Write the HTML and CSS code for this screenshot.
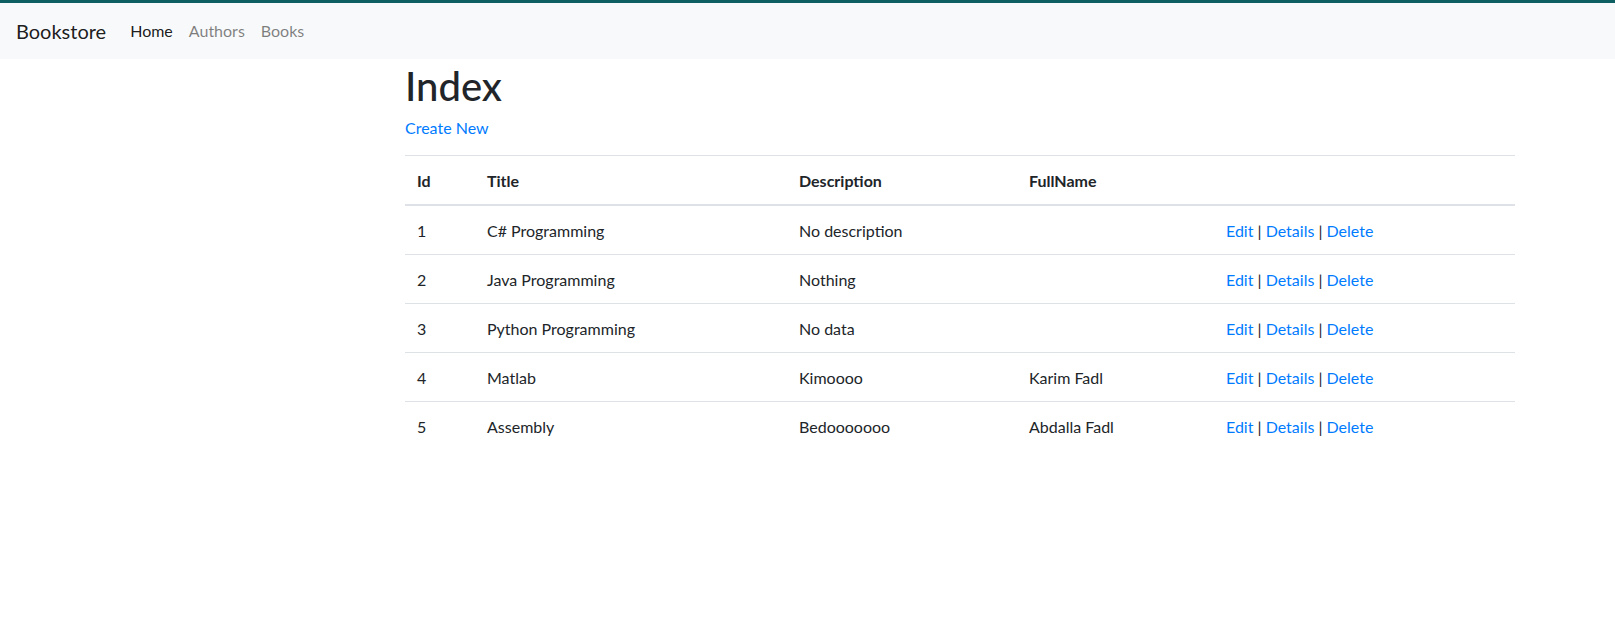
FILE: index.html
```html
<!DOCTYPE html>
<html lang="en">
<head>
<meta charset="utf-8">
<title>Index - Bookstore</title>
<link rel="stylesheet" href="styles.css">
</head>
<body>
<header class="navbar">
  <a class="brand" href="#">Bookstore</a>
  <nav class="nav">
    <a class="nav-link active" href="#">Home</a>
    <a class="nav-link" href="#">Authors</a>
    <a class="nav-link" href="#">Books</a>
  </nav>
</header>
<main class="main">
  <h1 class="title">Index</h1>
  <p class="create"><a href="#">Create New</a></p>
  <table class="table">
    <thead>
      <tr>
        <th class="c-id">Id</th>
        <th class="c-title">Title</th>
        <th class="c-desc">Description</th>
        <th class="c-name">FullName</th>
        <th class="c-act"></th>
      </tr>
    </thead>
    <tbody>
      <tr>
        <td>1</td><td>C# Programming</td><td>No description</td><td></td>
        <td><a href="#">Edit</a> | <a href="#">Details</a> | <a href="#">Delete</a></td>
      </tr>
      <tr>
        <td>2</td><td>Java Programming</td><td>Nothing</td><td></td>
        <td><a href="#">Edit</a> | <a href="#">Details</a> | <a href="#">Delete</a></td>
      </tr>
      <tr>
        <td>3</td><td>Python Programming</td><td>No data</td><td></td>
        <td><a href="#">Edit</a> | <a href="#">Details</a> | <a href="#">Delete</a></td>
      </tr>
      <tr>
        <td>4</td><td>Matlab</td><td>Kimoooo</td><td>Karim Fadl</td>
        <td><a href="#">Edit</a> | <a href="#">Details</a> | <a href="#">Delete</a></td>
      </tr>
      <tr>
        <td>5</td><td>Assembly</td><td>Bedooooooo</td><td>Abdalla Fadl</td>
        <td><a href="#">Edit</a> | <a href="#">Details</a> | <a href="#">Delete</a></td>
      </tr>
    </tbody>
  </table>
</main>
</body>
</html>
```
FILE: styles.css
```css
*{box-sizing:border-box}
html,body{margin:0}
body{
  font-family:Lato,"Noto Sans",sans-serif;
  font-size:16px;
  line-height:1.5;
  color:#212529;
  background:#fff;
}
a{color:#007bff;text-decoration:none}

.navbar{
  display:flex;
  align-items:center;
  background:#f8f9fa;
  border-top:3px solid #0d5f62;
  padding:8px 16px 8px;
}
.brand{
  font-size:20px;
  line-height:30px;
  padding:5px 0;
  margin-right:16px;
  color:rgba(0,0,0,.9);
}
.nav{display:flex}
.nav-link{
  padding:0 8px;
  line-height:24px;
  color:rgba(0,0,0,.5);
}
.nav-link.active{color:rgba(0,0,0,.9)}

.main{
  margin-left:405px;
  width:1110px;
}
.title{
  margin:3px 0 5px;
  font-size:40px;
  font-weight:500;
  line-height:1.2;
}
.create{margin:0 0 16px;padding-top:1px;line-height:23px}

.table{
  width:100%;
  border-collapse:collapse;
  table-layout:fixed;
}
.table th,.table td{
  padding:13px 12px 11px;
  border-top:1px solid #dee2e6;
  text-align:left;
  vertical-align:top;
}
.table th{font-weight:700}
.table thead th{border-bottom:2px solid #dee2e6}
.c-id{width:70px}
.c-title{width:312px}
.c-desc{width:230px}
.c-name{width:197px}
.c-act{width:301px}
```
